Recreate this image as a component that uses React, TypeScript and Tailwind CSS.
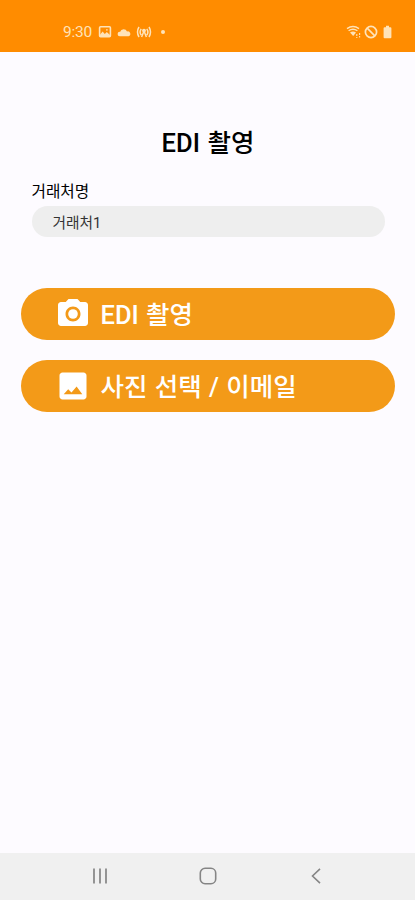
import React from 'react';

interface ActionButtonProps {
  icon: React.ReactNode;
  label: string;
}

const CameraIcon: React.FC = () => (
  <svg viewBox="0 0 24 24" fill="currentColor" className="h-9 w-9 shrink-0">
    <circle cx="12" cy="12" r="3.2" />
    <path d="M9 2 7.17 4H4c-1.1 0-2 .9-2 2v12c0 1.1.9 2 2 2h16c1.1 0 2-.9 2-2V6c0-1.1-.9-2-2-2h-3.17L15 2H9zm3 15c-2.76 0-5-2.24-5-5s2.24-5 5-5 5 2.24 5 5-2.24 5-5 5z" />
  </svg>
);

const PhotoIcon: React.FC = () => (
  <svg viewBox="0 0 24 24" fill="currentColor" className="h-9 w-9 shrink-0">
    <path d="M21 19V5c0-1.1-.9-2-2-2H5c-1.1 0-2 .9-2 2v14c0 1.1.9 2 2 2h14c1.1 0 2-.9 2-2zM8.8 14.2l2.2 2.2L14.4 12.300l3.800 5.200H5.800l3-3.300z" />
  </svg>
);

const StatusBar: React.FC = () => (
  <header className="flex h-[52px] items-center justify-between bg-[#ff8c00] pt-[12px] pr-[23px] pl-[63px] text-[#ffe3b8]">
    <div className="flex items-center">
      <span className="w-[35px] text-[15.5px] leading-5 tracking-[-0.2px]">9:30</span>
      <svg viewBox="0 0 14 14" className="h-[14px] w-[14px]" fill="none" stroke="currentColor" strokeWidth="1.6">
        <rect x="1.6" y="1.8" width="10.8" height="10" rx="1" />
        <path d="M2 11.5V9.8l2.6-3.2 2.2 2.4 2-2 3.2 3v1.5z" fill="currentColor" stroke="none" />
        <circle cx="8.9" cy="4.9" r=".8" fill="currentColor" stroke="none" />
      </svg>
      <svg viewBox="0 0 14 10" className="ml-[5px] h-[10px] w-[14px]" fill="currentColor">
        <path d="M2.8 9.2a2.2 2.2 0 0 1 0-4.4h.4A3.6 3.6 0 0 1 10 4.5a2.4 2.4 0 0 1 1.6 4.7z" />
      </svg>
      <svg viewBox="0 0 16 14" className="ml-[5px] h-[14px] w-[16px]" fill="none" stroke="currentColor" strokeWidth="1.5">
        <path d="M3 2Q0 7 3 12M13 2q3 5 0 10M5.2 3.8q-2.2 3.2 0 6.4M10.8 3.8q2.2 3.2 0 6.4M5.6 12 8 6l2.4 6" />
        <circle cx="8" cy="5.6" r="1.2" fill="currentColor" />
      </svg>
      <span className="ml-[9px] h-1 w-1 rounded-full bg-[#ffe3b8]" />
    </div>
    <div className="flex items-center">
      <svg viewBox="0 0 16 14" className="h-[14px] w-[16px]" fill="none" stroke="currentColor" strokeWidth="1.4">
        <path d="M1 3.6q6-4.2 12 0M2.600 5.800q4.400-3.200 8.800 0" />
        <path d="M4 7.600Q7 5.600 10 7.600L7.200 11z" fill="currentColor" stroke="none" />
        <path d="M10.800 9v4M13.600 8v4.500" strokeWidth="1.1" strokeDasharray="2 1" />
      </svg>
      <svg viewBox="0 0 14 14" className="ml-[2px] h-[14px] w-[14px]" fill="none" stroke="currentColor" strokeWidth="1.7">
        <circle cx="7" cy="7" r="5.6" />
        <path d="m3.200 3.200 7.600 7.600" />
      </svg>
      <svg viewBox="0 0 9 14" className="ml-[5px] h-[14px] w-[9px]" fill="currentColor">
        <path d="M3 .8h3v1.400h1.400q1 0 1 1v9q0 1-1 1H1.600q-1 0-1-1v-9q0-1 1-1H3z" />
      </svg>
    </div>
  </header>
);

const ActionButton: React.FC<ActionButtonProps> = ({ icon, label }) => (
  <button className="flex h-[52px] w-full items-center rounded-full bg-[#f39a18] pl-[34px] text-white">
    {icon}
    <span className="ml-[9.5px] pt-[3px] text-[25.5px] leading-8 font-medium [word-spacing:1px]">{label}</span>
  </button>
);

const NavigationBar: React.FC = () => (
  <nav className="flex h-[47px] items-center justify-between bg-[#f0f0f0] pr-[91px] pb-[2px] pl-[92px] text-[#858585]">
    <svg viewBox="0 0 16 16" className="h-4 w-4" fill="none" stroke="currentColor" strokeWidth="1.7">
      <path d="M2 .5v15M8 .5v15M14 .5v15" />
    </svg>
    <svg viewBox="0 0 18 18" className="h-[18px] w-[18px]" fill="none" stroke="currentColor" strokeWidth="1.6">
      <rect x="1.300" y="1.300" width="15.400" height="15.400" rx="4.800" />
    </svg>
    <svg viewBox="0 0 16 16" className="h-4 w-4" fill="none" stroke="currentColor" strokeWidth="1.6">
      <path d="M12 .8 4.500 8l7.500 7.200" />
    </svg>
  </nav>
);

const App: React.FC = () => {
  return (
    <div className="flex h-[900px] w-full flex-col bg-[#fdfbff] font-[Roboto,'Noto_Sans_CJK_KR',sans-serif] text-black">
      <StatusBar />
      <main className="flex-1 pt-[75px] pr-[20px] pl-[21px]">
        <h1 className="text-center text-[25.5px] leading-8 font-medium [word-spacing:1.3px]">EDI 촬영</h1>
        <div className="mt-[23px] pr-[10px] pl-[10.5px]">
          <label htmlFor="client" className="block text-[15.7px] leading-5">거래처명</label>
          <input
            id="client"
            defaultValue="거래처1"
            className="mt-1 block h-[31px] w-full rounded-full bg-[#eeeeee] pb-px pl-[21px] text-[14.7px] text-[#333333] outline-none"
          />
        </div>
        <div className="mt-[50.5px] flex flex-col gap-5">
          <ActionButton icon={<CameraIcon />} label="EDI 촬영" />
          <ActionButton icon={<PhotoIcon />} label="사진 선택 / 이메일" />
        </div>
      </main>
      <NavigationBar />
    </div>
  );
};

export default App;
